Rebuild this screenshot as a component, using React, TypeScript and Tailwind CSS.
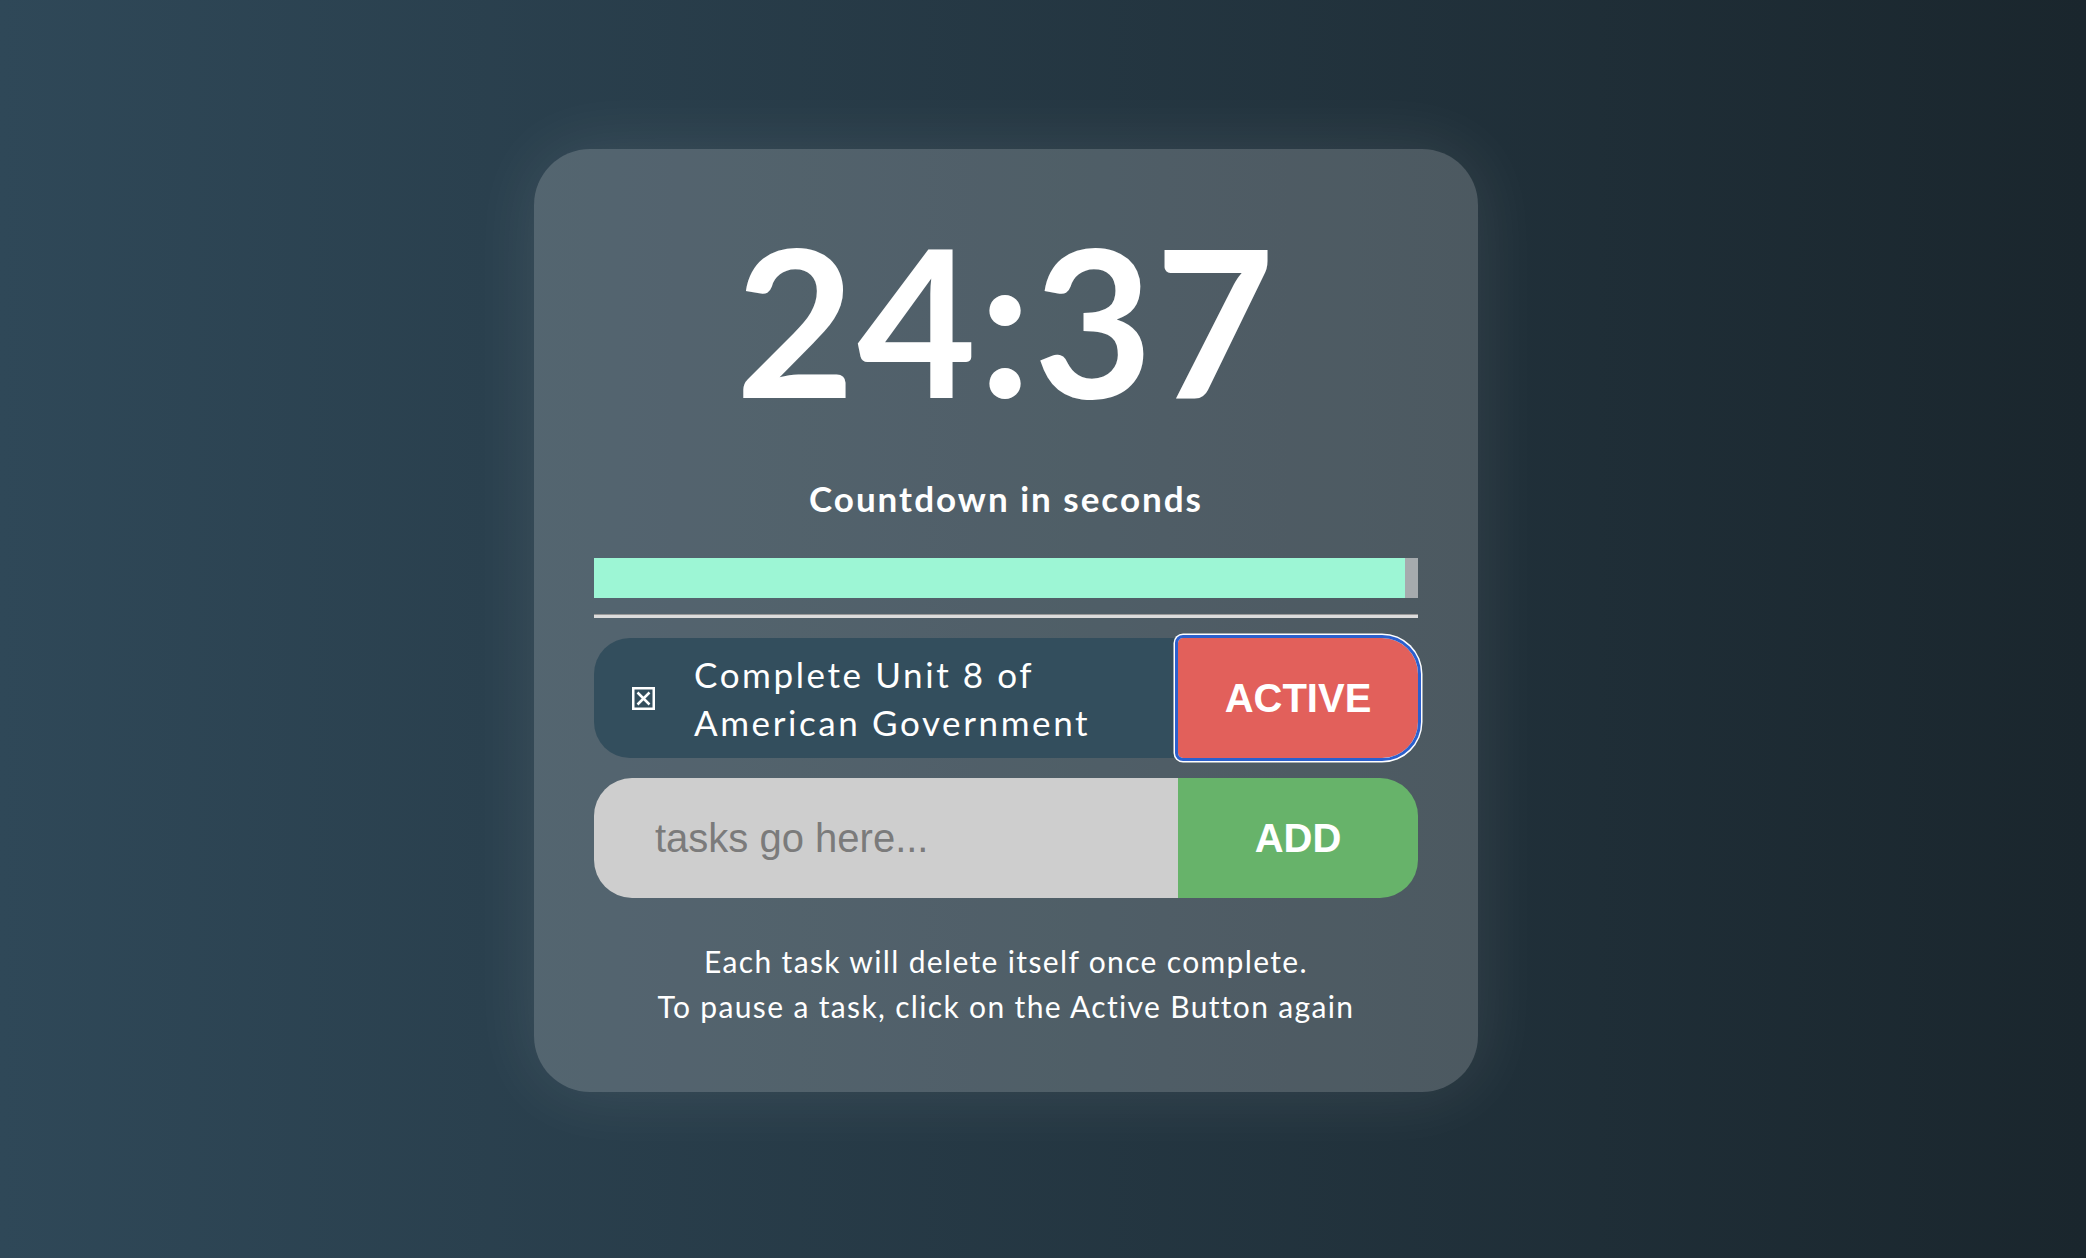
import React from "react";

export default function App() {
  return (
    <div
      className="min-h-screen w-full flex justify-center items-start pt-[149px] pr-[74px] bg-[linear-gradient(to_right,#2f4858,#1a262d)]"
      style={{ fontFamily: "Lato, 'Open Sans', sans-serif" }}
    >
      <div className="w-[944px] h-[943px] rounded-[56px] bg-white/20 shadow-[0_0_70px_rgba(255,255,255,0.10)] px-[60px] pt-[67px] flex flex-col">
        <div className="text-center text-white font-bold text-[206px] leading-none tracking-[2px]">24:37</div>
        <div className="mt-[59px] text-center text-white font-bold text-[35px] leading-none tracking-[2px]">
          Countdown in seconds
        </div>
        <div className="mt-[42px] h-[40px] w-full bg-[#a6abae] flex">
          <div className="h-full bg-[#9df6d5] w-[98.4%]" />
        </div>
        <div className="mt-[16px] h-[4px] w-full border-t border-[#9a9a9a] bg-[#dcdcdc]" />
        <div className="mt-[20px] h-[120px] w-full flex items-stretch">
          <div className="flex-1 flex items-center bg-[#334e5d] rounded-l-[36px] pl-[38px]">
            <svg width="23" height="23" viewBox="0 0 23 23" className="shrink-0">
              <rect x="1.25" y="1.25" width="20.5" height="20.5" fill="none" stroke="white" strokeWidth="2.5" />
              <path d="M5.5 5.5 L17.5 17.5 M17.5 5.5 L5.5 17.5" stroke="white" strokeWidth="2.5" />
            </svg>
            <div className="ml-[39px] text-white text-[35px] leading-[48px] tracking-[2.6px]">
              Complete Unit 8 of
              <br />
              American Government
            </div>
          </div>
          <button className="w-[240px] h-full bg-[#e2605b] rounded-l-[5px] rounded-r-[36px] outline-[3px] outline-solid outline-[#2c60cd] shadow-[0_0_0_4.5px_white] text-white font-bold text-[40px] font-['Liberation_Sans',Arial,sans-serif]">
            ACTIVE
          </button>
        </div>
        <div className="mt-[20px] h-[120px] w-full flex rounded-[38px] overflow-hidden">
          <div className="flex-1 bg-[#cecece] flex items-center pl-[61px]">
            <input
              placeholder="tasks go here..."
              className="w-full bg-transparent outline-none text-[40px] placeholder:text-[#7b7b7b] font-['Liberation_Sans',Arial,sans-serif]"
            />
          </div>
          <button className="w-[240px] h-full bg-[#67b36a] text-white font-bold text-[40px] font-['Liberation_Sans',Arial,sans-serif]">
            ADD
          </button>
        </div>
        <div className="mt-[41px] text-center text-white text-[30px] leading-[45px] tracking-[1.35px]">
          Each task will delete itself once complete.
          <br />
          To pause a task, click on the Active Button again
        </div>
      </div>
    </div>
  );
}
